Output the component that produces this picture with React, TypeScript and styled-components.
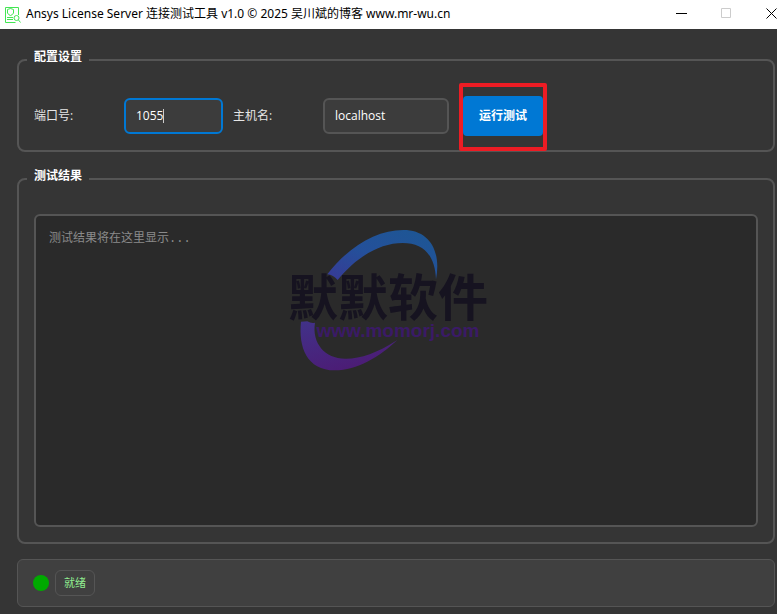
import React, { useState } from 'react';
import styled, { createGlobalStyle, css } from 'styled-components';

const uiFont = '"Open Sans", "Noto Sans CJK SC", sans-serif';

const GlobalStyle = createGlobalStyle`
  *, *::before, *::after { box-sizing: border-box; }
  body { margin: 0; background: #353535; }
  button, input, textarea { font: inherit; }
`;

const Window = styled.div`
  display: flex;
  flex-direction: column;
  height: 100vh;
  min-height: 440px;
  background: #353535;
  color: #e6e6e6;
  font: 12px/18px ${uiFont};
`;

const TitleBar = styled.header`
  display: flex;
  align-items: center;
  flex: none;
  height: 29px;
  padding-left: 4px;
  background: #fff;
  color: #000;
`;

const Title = styled.h1`
  flex: 1;
  margin: 0 0 0 5px;
  padding-bottom: 2px;
  font-family: "Noto Sans", "Noto Sans CJK SC", sans-serif;
  font-size: 12px;
  font-weight: 400;
  white-space: nowrap;
`;

const WindowButton = styled.button<{ $edge?: boolean }>`
  display: flex;
  align-items: center;
  justify-content: ${p => (p.$edge ? 'flex-start' : 'center')};
  width: ${p => (p.$edge ? 28 : 45)}px;
  height: 26px;
  padding: 0 0 0 ${p => (p.$edge ? 17 : 0)}px;
  margin-bottom: 3px;
  border: 0;
  background: none;
  color: #000;
  &:disabled { color: #ccc; }
  svg { flex: none; }
`;

const Content = styled.main`
  display: grid;
  flex: 1;
  grid-template-rows: auto minmax(0, 1fr) auto;
  grid-template-columns: minmax(0, 1fr);
  min-height: 0;
  padding: 22px 2px 7px 17px;
`;

const Group = styled.fieldset<{ $fill?: boolean }>`
  min-width: 0;
  margin: 0 0 ${p => (p.$fill ? 15 : 18)}px;
  padding: ${p => (p.$fill ? '26px 15px 15px' : '14px 15px 0')};
  border: 2px solid #555;
  border-radius: 8px;
  ${p => !p.$fill && css`height: 101px;`}
`;

const Legend = styled.legend`
  margin-left: -7px;
  padding: 0 7px 6px;
  color: #fff;
  font-weight: 700;
  line-height: 12px;
`;

const Fields = styled.div`
  display: flex;
  align-items: center;
  height: 67px;
  padding-bottom: 2px;
`;

const Label = styled.label<{ $gap?: boolean }>`
  width: 90px;
  margin-left: ${p => (p.$gap ? 10 : 0)}px;
`;

const FieldBox = styled.div`
  position: relative;
  display: flex;
`;

const Field = styled.input<{ $wide?: boolean }>`
  width: ${p => (p.$wide ? 126 : 99)}px;
  height: 36px;
  padding: 0 10px;
  border: 2px solid #555;
  border-radius: 6px;
  outline: 0;
  background: #3c3c3c;
  color: #fff;
  &:focus { border-color: #0078d4; }
`;

const PortField = styled(Field)`
  caret-color: transparent;
`;

const Caret = styled.span<{ $chars: number }>`
  position: absolute;
  top: 11px;
  left: calc(12px + ${p => p.$chars}ch);
  display: none;
  width: 1px;
  height: 14px;
  background: #ccc;
  input:focus + & { display: block; }
`;

const Highlight = styled.div`
  display: flex;
  align-items: center;
  height: 68px;
  margin: 2px 0 0 10px;
  padding-bottom: 2px;
  border: 4px solid #ed1c24;
  border-radius: 2px;
`;

const RunButton = styled.button`
  width: 80px;
  height: 40px;
  padding: 0;
  border: 0;
  border-radius: 4px;
  background: #0078d4;
  color: #fff;
  font-weight: 700;
`;

const ResultPane = styled.div`
  position: relative;
  display: flex;
  height: 100%;
`;

const Output = styled.textarea`
  flex: 1;
  min-width: 0;
  padding: 14px 13px;
  border: 2px solid #555;
  border-radius: 6px;
  outline: 0;
  resize: none;
  background: #2a2a2a;
  color: #e6e6e6;
  font: 12px/18px "Liberation Mono", "Noto Sans CJK SC", monospace;
  &::placeholder { color: #8a8a8a; opacity: 1; }
`;

const Watermark = styled.svg`
  position: absolute;
  top: 10px;
  left: 50%;
  width: 232px;
  height: 152px;
  transform: translateX(-50%);
  pointer-events: none;
`;

const StatusBar = styled.footer`
  display: flex;
  align-items: center;
  gap: 6px;
  height: 48px;
  padding: 0 15px;
  border: 1px solid #555;
  border-radius: 6px;
  background: #404040;
`;

const StatusDot = styled.span`
  width: 16px;
  height: 16px;
  border-radius: 50%;
  background: #00aa00;
`;

const StatusText = styled.output`
  padding: 4px 8px;
  border: 1px solid #555;
  border-radius: 6px;
  color: #90ee90;
  font-size: 11px;
  line-height: 16px;
`;

const AppIcon = () => (
  <svg width="17" height="17" viewBox="0 0 17 17" fill="none" stroke="#43e653" aria-hidden="true">
    <path d="M14.5 9V1.5h-13v15h10" />
    <path d="M3.5 3.5 6.5 2.5l3 1v3.500q-1 2-3 2.500q-2-.5-3-2.500z" />
    <path d="M3 11.500h6M3 13.500h6" />
    <circle cx="12.5" cy="12" r="2.500" />
    <path d="m14.500 14 2 2.500" />
  </svg>
);

const BrandMark = () => (
  <Watermark viewBox="30 12 696 456" aria-hidden="true">
    <defs>
      <linearGradient id="upper" x1="0" y1="1" x2="1" y2="0">
        <stop offset="0" stopColor="#383995" />
        <stop offset="0.45" stopColor="#24509a" />
        <stop offset="1" stopColor="#1c5793" />
      </linearGradient>
      <linearGradient id="lower" x1="0" y1="0" x2="0.5" y2="1">
        <stop offset="0" stopColor="#413289" />
        <stop offset="1" stopColor="#4c1c75" />
      </linearGradient>
    </defs>
    <path fill="url(#upper)" d="M172 163C235 80 320 30 400 30C480 30 514 95 498 178C495 105 460 69 398 69C330 69 260 110 203 180Q190 165 172 163Z" />
    <path fill="url(#lower)" d="M93 305C85 380 110 451 195 451C260 451 330 410 382 360C320 400 270 417 225 416C165 415 125 370 135 308Q125 312 112 304Z" />
    <text x="354" y="288" textAnchor="middle" fill="#161320" fontFamily='"Noto Sans CJK SC", sans-serif' fontSize="150" fontWeight="700">默默软件</text>
    <text x="384" y="352" textAnchor="middle" fill="#3b1a66" fontFamily='"Liberation Sans", sans-serif' fontSize="57" fontWeight="700">www.momorj.com</text>
  </Watermark>
);

export default function App() {
  const [port, setPort] = useState('1055');
  const [host, setHost] = useState('localhost');

  return (
    <Window>
      <GlobalStyle />
      <TitleBar>
        <AppIcon />
        <Title>Ansys License Server 连接测试工具 v1.0 © 2025 吴川斌的博客 www.mr-wu.cn</Title>
        <WindowButton type="button" aria-label="最小化">
          <svg width="11" height="11" stroke="currentColor"><path d="M0 5.5h11" /></svg>
        </WindowButton>
        <WindowButton type="button" aria-label="最大化" disabled>
          <svg width="11" height="11" fill="none" stroke="currentColor"><path d="M.5.5h9v9h-9z" /></svg>
        </WindowButton>
        <WindowButton type="button" aria-label="关闭" $edge>
          <svg width="11" height="11" stroke="currentColor"><path d="m.5.5 10 10m0-10-10 10" /></svg>
        </WindowButton>
      </TitleBar>
      <Content>
        <Group>
          <Legend>配置设置</Legend>
          <Fields>
            <Label htmlFor="port">端口号:</Label>
            <FieldBox>
              <PortField id="port" value={port} onChange={e => setPort(e.target.value)} autoFocus />
              <Caret $chars={port.length} />
            </FieldBox>
            <Label htmlFor="host" $gap>主机名:</Label>
            <Field id="host" value={host} onChange={e => setHost(e.target.value)} $wide />
            <Highlight>
              <RunButton type="button">运行测试</RunButton>
            </Highlight>
          </Fields>
        </Group>
        <Group $fill>
          <Legend>测试结果</Legend>
          <ResultPane>
            <Output aria-label="测试结果" placeholder="测试结果将在这里显示..." readOnly />
            <BrandMark />
          </ResultPane>
        </Group>
        <StatusBar>
          <StatusDot />
          <StatusText>就绪</StatusText>
        </StatusBar>
      </Content>
    </Window>
  );
}
